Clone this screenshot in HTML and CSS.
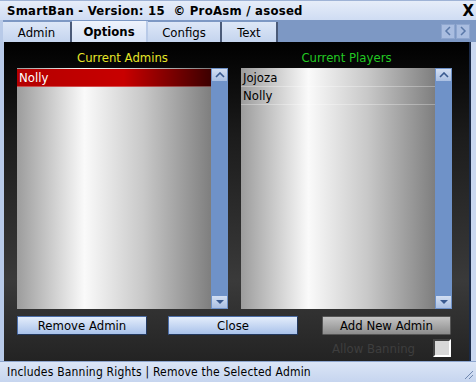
FILE: index.html
```html
<!DOCTYPE html>
<html lang="en">
<head>
  <meta charset="UTF-8" />
  <title>SmartBan</title>
  <link rel="stylesheet" href="styles.css">
</head>
<body>
  <div class="window">
    <div class="titlebar">
      <span class="title">SmartBan - Version: 15&nbsp; © ProAsm / asosed</span>
      <span class="close">X</span>
    </div>

    <div class="tabbar">
      <div class="tab">Admin</div>
      <div class="tab active">Options</div>
      <div class="tab">Configs</div>
      <div class="tab">Text</div>
      <div class="tab-arrows">
        <span class="arrow-btn"><svg width="8" height="10" viewBox="0 0 8 10"><path d="M6 1 L2 5 L6 9" fill="none" stroke="#5a78a8" stroke-width="1.5"/></svg></span>
        <span class="arrow-btn"><svg width="8" height="10" viewBox="0 0 8 10"><path d="M2 1 L6 5 L2 9" fill="none" stroke="#5a78a8" stroke-width="1.5"/></svg></span>
      </div>
    </div>

    <div class="panel">
      <div class="columns">
        <div class="col">
          <div class="col-title admins">Current Admins</div>
          <div class="listbox">
            <div class="items">
              <div class="item selected">Nolly</div>
            </div>
            <div class="scrollbar">
              <span class="sb-btn"><svg width="10" height="6" viewBox="0 0 10 6"><path d="M1 5 L5 1 L9 5" fill="none" stroke="#3a5a90" stroke-width="1.6"/></svg></span>
              <span class="sb-btn"><svg width="10" height="6" viewBox="0 0 10 6"><path d="M1 1 L9 1 L5 5 Z" fill="#3a5a90"/></svg></span>
            </div>
          </div>
        </div>
        <div class="col">
          <div class="col-title players">Current Players</div>
          <div class="listbox">
            <div class="items">
              <div class="item">Jojoza</div>
              <div class="item">Nolly</div>
            </div>
            <div class="scrollbar">
              <span class="sb-btn"><svg width="10" height="6" viewBox="0 0 10 6"><path d="M1 5 L5 1 L9 5" fill="none" stroke="#3a5a90" stroke-width="1.6"/></svg></span>
              <span class="sb-btn"><svg width="10" height="6" viewBox="0 0 10 6"><path d="M1 1 L9 1 L5 5 Z" fill="#3a5a90"/></svg></span>
            </div>
          </div>
        </div>
      </div>

      <div class="buttons">
        <button class="btn">Remove Admin</button>
        <button class="btn">Close</button>
        <button class="btn gray">Add New Admin</button>
      </div>

      <div class="option-row">
        <span class="option-label">Allow Banning</span>
        <span class="checkbox"></span>
      </div>
    </div>

    <div class="statusbar">
      <span>Includes Banning Rights | Remove the Selected Admin</span>
      <svg class="grip" width="10" height="10" viewBox="0 0 10 10"><path d="M1 9 L9 1 M5 9 L9 5" stroke="#7088b0" stroke-width="1"/></svg>
    </div>
  </div>
</body>
</html>
```

FILE: styles.css
```css
body {
  margin: 0;
  font-family: "DejaVu Sans Condensed", "DejaVu Sans", sans-serif;
  font-size: 12px;
  background: #fff;
}
.window {
  width: 476px;
  height: 382px;
  display: flex;
  flex-direction: column;
  background: #c9d7f0;
  overflow: hidden;
}
.titlebar {
  height: 20px;
  display: flex;
  align-items: center;
  justify-content: space-between;
  padding: 0 2px 0 7px;
  background: linear-gradient(#e6edf9, #cfdcf3);
  border-top: 1px solid #9fb3d6;
  box-sizing: border-box;
}
.title {
  font-weight: bold;
  font-size: 13px;
  letter-spacing: 0.25px;
  color: #000;
}
.close {
  font-family: "DejaVu Sans", sans-serif;
  font-weight: bold;
  font-size: 15px;
  color: #000;
}
.tabbar {
  height: 22px;
  display: flex;
  align-items: flex-end;
  background: #7d98c4;
  border-left: 3px solid #b8cae8;
  padding-right: 6px;
}
.tab {
  height: 20px;
  display: flex;
  align-items: center;
  justify-content: center;
  background: linear-gradient(#dde7f7, #c4d4ee);
  color: #000;
  font-size: 13px;
  border-right: 2px solid #4a5a78;
}
.tab:nth-child(1) { width: 67px; }
.tab:nth-child(2) { width: 74px; }
.tab:nth-child(3) { width: 72px; }
.tab:nth-child(4) { width: 54px; }
.tab.active {
  height: 21px;
  font-weight: bold;
  background: linear-gradient(#eef3fc, #d6e2f6);
  border-right: 2px solid #b8cae8;
}
.tab-arrows {
  margin-left: auto;
  display: flex;
  gap: 1px;
  align-self: center;
}
.arrow-btn {
  width: 12px;
  height: 13px;
  display: flex;
  align-items: center;
  justify-content: center;
  background: #a9bde0;
  border: 1px solid #8ea6cf;
}
.panel {
  flex: 1;
  display: flex;
  flex-direction: column;
  background: linear-gradient(#000 0%, #1c1c1c 30%, #3a3a3a 75%, #232323 100%);
  border-left: 4px solid #b8cae8;
  border-right: 2px solid #1a2a48;
  margin-right: 5px;
  padding: 6px 0 0 13px;
}
.columns {
  display: flex;
  gap: 13px;
}
.col {
  width: 211px;
  display: flex;
  flex-direction: column;
}
.col-title {
  text-align: center;
  font-size: 13px;
  height: 20px;
  line-height: 20px;
}
.admins { color: #e6e628; }
.players { color: #22c822; }
.listbox {
  height: 241px;
  display: flex;
  background: linear-gradient(to right, #9c9c9c 0%, #fafafa 32%, #c8c8c8 60%, #6c6c6c 100%);
}
.items {
  flex: 1;
  padding-top: 1px;
}
.item {
  height: 17px;
  line-height: 17px;
  padding-left: 2px;
  font-size: 13px;
  color: #000;
  border-bottom: 1px solid rgba(255, 255, 255, 0.3);
}
.item.selected {
  color: #fff;
  background: linear-gradient(to right, #b40000, #c80000 55%, #3c0000);
}
.scrollbar {
  width: 17px;
  display: flex;
  flex-direction: column;
  justify-content: space-between;
  background: #6f92c8;
}
.sb-btn {
  height: 12px;
  margin: 1px;
  display: flex;
  align-items: center;
  justify-content: center;
  background: linear-gradient(#d2def2, #aabfe2);
}
.buttons {
  display: flex;
  margin-top: 7px;
}
.btn {
  width: 130px;
  height: 19px;
  padding: 0;
  font-family: inherit;
  font-size: 13px;
  color: #000;
  background: linear-gradient(#e4edfb, #a9c2ea);
  border: 1px solid #4c6ea8;
  border-bottom-color: #22385e;
  border-right-color: #22385e;
  border-radius: 1px;
}
.btn + .btn { margin-left: 21px; }
.btn.gray {
  margin-left: 24px;
  width: 129px;
  background: linear-gradient(#c4c4c4, #8c8c8c);
  border-color: #555;
}
.option-row {
  display: flex;
  align-items: center;
  margin-top: 4px;
  padding-left: 315px;
}
.option-label {
  width: 101px;
  color: #3e3e3e;
  font-size: 13px;
}
.checkbox {
  width: 14px;
  height: 14px;
  background: #d8d8d8;
  border: 2px solid #fff;
  border-top-color: #444;
  border-left-color: #444;
}
.statusbar {
  height: 21px;
  display: flex;
  align-items: center;
  justify-content: space-between;
  padding: 0 2px 0 7px;
  background: linear-gradient(#dbe5f6, #c6d5ef);
  border-top: 1px solid #8ea6cf;
  font-size: 12px;
  letter-spacing: 0.2px;
  color: #000;
  box-sizing: border-box;
}
.grip { align-self: flex-end; margin-bottom: 2px; }
```
